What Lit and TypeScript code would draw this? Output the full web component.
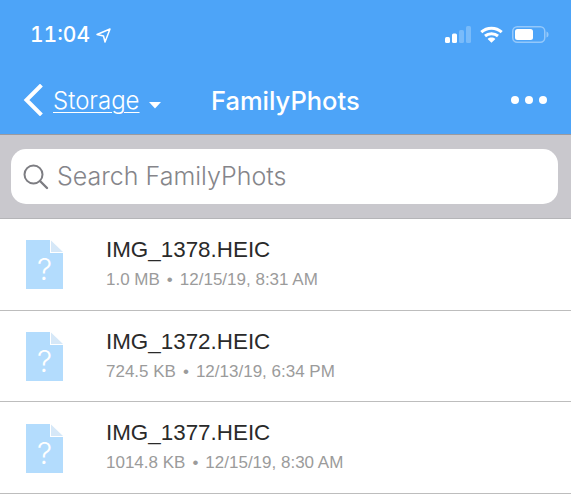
import { LitElement, html, css, svg } from "lit";
import { customElement } from "lit/decorators.js";

const FILES = [
  { name: "IMG_1378.HEIC", meta: "1.0 MB", date: "12/15/19, 8:31 AM" },
  { name: "IMG_1372.HEIC", meta: "724.5 KB", date: "12/13/19, 6:34 PM" },
  { name: "IMG_1377.HEIC", meta: "1014.8 KB", date: "12/15/19, 8:30 AM" },
];

const fileIcon = svg`<svg class="file" viewBox="0 0 37 49" width="37" height="49">
  <path d="M0 0H24V13H37V49H0Z" fill="#b3dcfd"/>
  <path d="M25 0.5L37 12H25Z" fill="#d6e8f8"/>
</svg>`;

@customElement("app-root")
export class AppRoot extends LitElement {
  static styles = css`
    :host { display: block; width: 571px; height: 500px; overflow: hidden; background: #fff;
      font-family: "Liberation Sans", Arial, sans-serif; }
    .header { height: 134px; background: #4da4f8; color: #fff; display: flex; flex-direction: column;
      font-family: Inter, "Liberation Sans", sans-serif; border-bottom: 1px solid #9a9aa0; }
    .status { height: 68px; padding: 23px 22px 0 30px; box-sizing: border-box; display: flex; align-items: flex-start; justify-content: space-between; }
    .time { display: flex; align-items: center; gap: 6px; font-size: 21px; font-weight: 500; line-height: 24px; font-variant-numeric: tabular-nums; }
    .indicators { display: flex; align-items: center; gap: 9px; height: 24px; margin-top: -1px; }
    .nav { position: relative; flex: 1; display: flex; align-items: center; padding: 0 24px 0 23px; margin-top: -2px; justify-content: space-between; }
    .back { display: flex; align-items: center; gap: 10px; font-size: 24px; font-weight: 300; }
    .back u { text-underline-offset: 3px; text-decoration-thickness: 1px; }
    .caret { margin-left: -1px; margin-top: 10px; }
    .title { position: absolute; left: 211px; top: 50%; transform: translateY(-50%); font-size: 25.5px; font-weight: 500; }
    .dots { display: flex; gap: 6px; }
    .dots i { width: 8px; height: 8px; border-radius: 50%; background: #fff; display: block; }
    .search-wrap { height: 84px; background: #c9c8cd; padding: 14px 13px 14px 11px; box-sizing: border-box; border-bottom: 1px solid #b5b5b8; }
    .search { height: 55px; background: #fff; border-radius: 15px; display: flex; align-items: center; padding-left: 12px; gap: 8px;
      color: #85858a; font-family: Inter, "Liberation Sans", sans-serif; font-size: 25px; font-weight: 300; }
    .search span { margin-top: -2px; }
    .row { height: 91.7px; box-sizing: border-box; border-bottom: 1.5px solid #bdbdbd; display: flex; align-items: center; padding-left: 26px; }
    .icon { position: relative; width: 37px; height: 49px; flex: none; margin-top: 1px; }
    .icon .q { position: absolute; left: 0; right: 0; top: 12px; text-align: center; color: #fff; font-size: 30px; line-height: 34px; font-weight: 300; font-family: Inter, sans-serif; }
    .file { display: block; }
    .text { margin-left: 43px; display: flex; flex-direction: column; gap: 7px; margin-top: -2px; }
    .name { font-size: 22.4px; line-height: 26px; color: #2a2a2a; }
    .meta { font-size: 17px; line-height: 20px; color: #9b9b9b; display: flex; gap: 7px; }
  `;

  render() {
    return html`
      <div class="header">
        <div class="status">
          <div class="time">11:04
            <svg width="15" height="15" viewBox="0 0 15 15" fill="none" stroke="#fff" stroke-width="1.5" stroke-linejoin="round"><path d="M1 6.5L14 1L9 14L7.5 8Z"/></svg>
          </div>
          <div class="indicators">
            <svg width="26" height="17" viewBox="0 0 26 17">
              <rect x="0" y="11" width="5" height="6" rx="1.5" fill="#fff"/>
              <rect x="7" y="7.5" width="5" height="9.5" rx="1.5" fill="#fff"/>
              <rect x="14" y="4" width="5" height="13" rx="1.5" fill="#fff" opacity=".25"/>
              <rect x="21" y="0" width="5" height="17" rx="1.5" fill="#fff" opacity=".25"/>
            </svg>
            <svg width="23" height="17" viewBox="0 0 23 17" fill="none" stroke="#fff" stroke-width="3">
              <path d="M1.3 6.2C7 1 16 1 21.7 6.2"/>
              <path d="M5 10C8.6 7 14.4 7 18 10"/>
              <path d="M11.5 16.8L7.6 12.9C9.8 11.1 13.2 11.1 15.4 12.9Z" fill="#fff" stroke="none"/>
            </svg>
            <svg width="37" height="17" viewBox="0 0 37 17">
              <rect x=".75" y=".75" width="32" height="15.5" rx="4.5" fill="none" stroke="#fff" stroke-opacity=".4" stroke-width="1.5"/>
              <rect x="3" y="3" width="18" height="11" rx="2.5" fill="#fff"/>
              <path d="M34.5 5.5C36 6 36.5 7 36.5 8.5S36 11 34.5 11.5Z" fill="#fff" fill-opacity=".4"/>
            </svg>
          </div>
        </div>
        <div class="nav">
          <div class="back">
            <svg width="20" height="32" viewBox="0 0 20 32" fill="none" stroke="#fff" stroke-width="4" stroke-linecap="square"><path d="M17 2.5L3.5 16L17 29.5"/></svg>
            <u>Storage</u>
            <svg class="caret" width="12" height="7" viewBox="0 0 12 7"><path d="M0 0H12L6 6.5Z" fill="#fff"/></svg>
          </div>
          <div class="title">FamilyPhots</div>
          <div class="dots"><i></i><i></i><i></i></div>
        </div>
      </div>
      <div class="search-wrap">
        <div class="search">
          <svg width="26" height="26" viewBox="0 0 26 26" fill="none" stroke="#7d7d82" stroke-width="2"><circle cx="10.5" cy="10.5" r="9"/><path d="M17 17L24 24" stroke-linecap="round" stroke-width="2.4"/></svg>
          <span>Search FamilyPhots</span>
        </div>
      </div>
      ${FILES.map(f => html`
        <div class="row">
          <div class="icon">${fileIcon}<span class="q">?</span></div>
          <div class="text">
            <div class="name">${f.name}</div>
            <div class="meta"><span>${f.meta}</span><span>•</span><span>${f.date}</span></div>
          </div>
        </div>`)}
    `;
  }
}
